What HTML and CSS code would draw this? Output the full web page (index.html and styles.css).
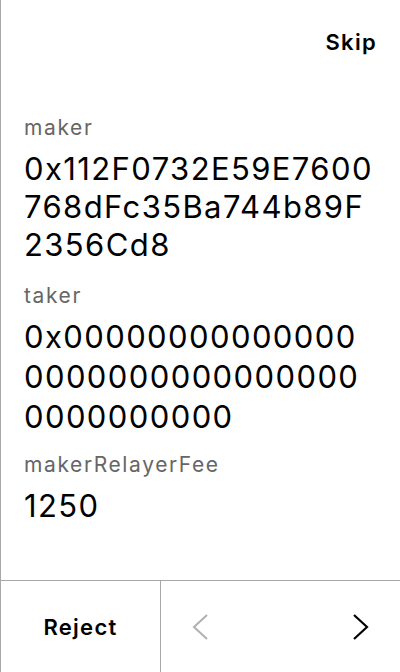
FILE: index.html
```html
<!DOCTYPE html>
<html>
<head>
<meta charset="utf-8">
<link rel="stylesheet" href="styles.css">
</head>
<body>
<div class="page">
  <div class="topbar"><span class="skip">Skip</span></div>
  <div class="fields">
    <div class="field">
      <div class="label">maker</div>
      <div class="value"><span class="line">0x112F0732E59E7600</span><span class="line">768dFc35Ba744b89F</span><span class="line">2356Cd8</span></div>
    </div>
    <div class="field">
      <div class="label">taker</div>
      <div class="value value-loose"><span class="line">0x00000000000000</span><span class="line">0000000000000000</span><span class="line">0000000000</span></div>
    </div>
    <div class="field">
      <div class="label">makerRelayerFee</div>
      <div class="value"><span class="line">1250</span></div>
    </div>
  </div>
  <div class="footer">
    <div class="reject">Reject</div>
    <div class="nav">
      <svg class="chev chev-off" width="16" height="26" viewBox="0 0 16 26"><path d="M15 1 L2 13 L15 25" fill="none" stroke="currentColor" stroke-width="2"/></svg>
      <svg class="chev chev-on" width="16" height="26" viewBox="0 0 16 26"><path d="M1 1 L14 13 L1 25" fill="none" stroke="currentColor" stroke-width="2.2"/></svg>
    </div>
  </div>
</div>
</body>
</html>
```
FILE: styles.css
```css
html, body {
  margin: 0;
  padding: 0;
  background: #fff;
}
body {
  font-family: Inter, "Noto Sans", sans-serif;
  color: #000;
}
.page {
  width: 400px;
  height: 672px;
  box-sizing: border-box;
  border-left: 1px solid #a8a8a8;
  display: flex;
  flex-direction: column;
}
.topbar {
  display: flex;
  justify-content: flex-end;
  padding: 30px 24px 0 24px;
  height: 24px;
}
.skip {
  font-size: 22px;
  line-height: 24px;
  font-weight: 600;
  letter-spacing: 1.3px;
  margin-right: -1px;
}
.fields {
  padding: 62px 20px 0 23px;
  display: flex;
  flex-direction: column;
  gap: 20px;
}
.label {
  font-size: 21px;
  line-height: 24px;
  color: #666;
  letter-spacing: 1.6px;
  margin-bottom: 10px;
}
.value {
  font-size: 31px;
  line-height: 38px;
  letter-spacing: 1.4px;
}
.value-loose {
  line-height: 40px;
  margin: -1px 0 -4px;
}
.line {
  display: block;
  white-space: nowrap;
}
.footer {
  margin-top: auto;
  height: 92px;
  box-sizing: border-box;
  border-top: 1px solid #a8a8a8;
  display: flex;
}
.reject {
  width: 159px;
  border-right: 1px solid #a8a8a8;
  display: flex;
  align-items: center;
  justify-content: center;
  font-size: 22px;
  font-weight: 600;
  letter-spacing: 1.3px;
  box-sizing: content-box;
}
.nav {
  flex: 1;
  display: flex;
  align-items: center;
  justify-content: space-between;
  padding: 0 31px 0 31px;
}
.chev { display: block; }
.chev-off { color: #b0b0b0; }
.chev-on { color: #000; }
```
